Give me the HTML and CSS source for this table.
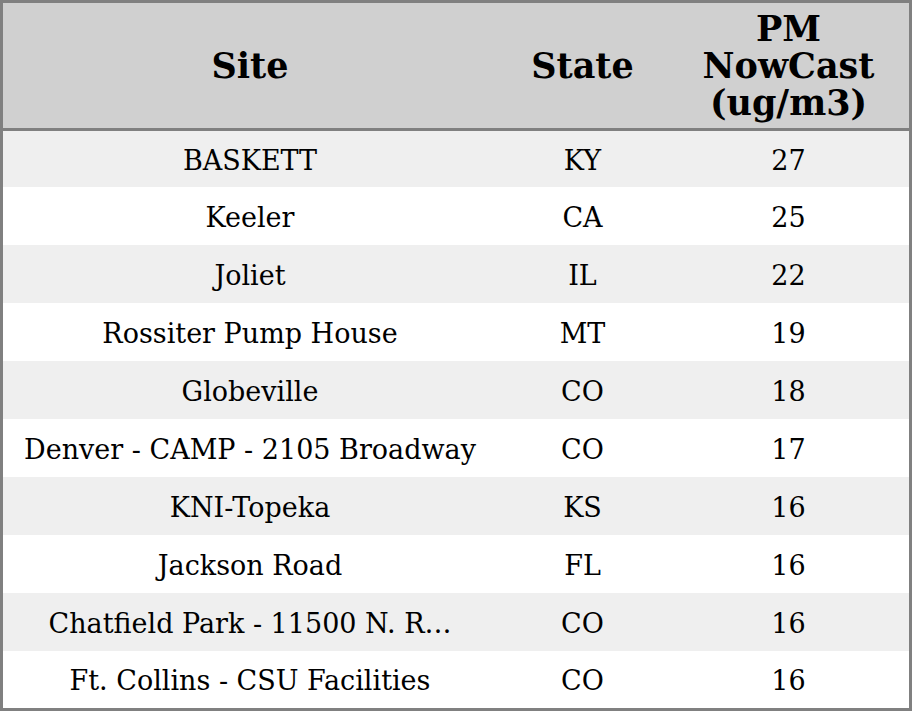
FILE: index.html
```html
<!DOCTYPE html>
<html>
<head>
<meta charset="utf-8">
<link rel="stylesheet" href="styles.css">
</head>
<body>
<div class="table">
  <div class="cell head">Site</div>
  <div class="cell head">State</div>
  <div class="cell head">PM<br>NowCast<br>(ug/m3)</div>

  <div class="cell odd">BASKETT</div><div class="cell odd">KY</div><div class="cell odd">27</div>
  <div class="cell">Keeler</div><div class="cell">CA</div><div class="cell">25</div>
  <div class="cell odd">Joliet</div><div class="cell odd">IL</div><div class="cell odd">22</div>
  <div class="cell">Rossiter Pump House</div><div class="cell">MT</div><div class="cell">19</div>
  <div class="cell odd">Globeville</div><div class="cell odd">CO</div><div class="cell odd">18</div>
  <div class="cell">Denver - CAMP - 2105 Broadway</div><div class="cell">CO</div><div class="cell">17</div>
  <div class="cell odd">KNI-Topeka</div><div class="cell odd">KS</div><div class="cell odd">16</div>
  <div class="cell">Jackson Road</div><div class="cell">FL</div><div class="cell">16</div>
  <div class="cell odd">Chatfield Park - 11500 N. R…</div><div class="cell odd">CO</div><div class="cell odd">16</div>
  <div class="cell">Ft. Collins - CSU Facilities</div><div class="cell">CO</div><div class="cell">16</div>
</div>
</body>
</html>
```
FILE: styles.css
```css
html, body {
  margin: 0;
  padding: 0;
  background: #ffffff;
}
.table {
  box-sizing: border-box;
  width: 912px;
  height: 711px;
  border: 3px solid #808080;
  display: grid;
  grid-template-columns: 494px 171px 1fr;
  grid-template-rows: 128px 56px repeat(8, 58px) 1fr;
  font-family: "DejaVu Serif", serif;
  color: #000;
}
.cell {
  display: flex;
  align-items: center;
  justify-content: center;
  text-align: center;
  font-size: 27px;
  white-space: nowrap;
  background: #ffffff;
  padding-top: 2px;
}
.cell.odd {
  background: #efefef;
}
.cell.head {
  background: #d0d0d0;
  border-bottom: 3px solid #808080;
  font-weight: bold;
  font-size: 35px;
  line-height: 37px;
  padding-top: 0;
}
```
